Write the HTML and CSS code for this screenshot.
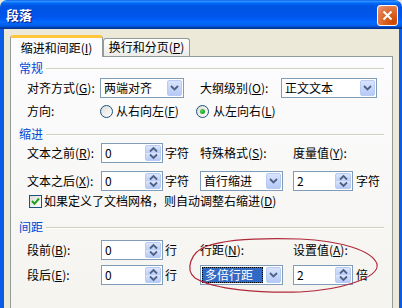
FILE: index.html
```html
<!DOCTYPE html>
<html lang="zh-CN">
<head>
    <meta charset="UTF-8">
    <title>段落</title>
    <link rel="stylesheet" href="styles.css">
</head>
<body>

    <div class="window">
        <!-- Title bar -->
        <div class="titlebar">
            <span class="title">段落</span>
            <span class="close-btn">
                <svg width="11" height="11" viewBox="0 0 11 11"><path d="M1.5 1.5 L9.5 9.5 M9.5 1.5 L1.5 9.5"/></svg>
            </span>
        </div>

        <div class="frame">
            <!-- Tabs -->
            <div class="tabs">
                <div class="tab active">缩进和间距(<u>I</u>)</div>
                <div class="tab">换行和分页(<u>P</u>)</div>
            </div>

            <div class="panel">
                <!-- 常规 -->
                <div class="group-title"><span>常规</span></div>
                <div class="row row-general">
                    <span class="label label-first">对齐方式(<u>G</u>):</span>
                    <div class="select select-align">
                        <span class="select-text">两端对齐</span>
                        <span class="drop-btn"><svg width="9" height="6" viewBox="0 0 9 6"><polyline points="1,1 4.5,4.5 8,1"/></svg></span>
                    </div>
                    <span class="label label-outline">大纲级别(<u>O</u>):</span>
                    <div class="select select-outline">
                        <span class="select-text">正文文本</span>
                        <span class="drop-btn"><svg width="9" height="6" viewBox="0 0 9 6"><polyline points="1,1 4.5,4.5 8,1"/></svg></span>
                    </div>
                </div>
                <div class="row row-dir">
                    <span class="label label-first">方向:</span>
                    <span class="radio-item radio-rtl"><span class="radio"></span>从右向左(<u>F</u>)</span>
                    <span class="radio-item"><span class="radio checked"></span>从左向右(<u>L</u>)</span>
                </div>

                <!-- 缩进 -->
                <div class="group-title group-indent"><span>缩进</span></div>
                <div class="row row-before">
                    <span class="label">文本之前(<u>R</u>):</span>
                    <div class="spinner">
                        <span class="spin-value">0</span>
                        <span class="spin-btn"><svg width="9" height="14" viewBox="0 0 9 14"><polyline points="1,5.5 4.5,2 8,5.5"/><polyline points="1,8.5 4.5,12 8,8.5"/></svg></span>
                    </div>
                    <span class="unit">字符</span>
                    <span class="label label-mid">特殊格式(<u>S</u>):</span>
                    <span class="label">度量值(<u>Y</u>):</span>
                </div>
                <div class="row row-after">
                    <span class="label">文本之后(<u>X</u>):</span>
                    <div class="spinner">
                        <span class="spin-value">0</span>
                        <span class="spin-btn"><svg width="9" height="14" viewBox="0 0 9 14"><polyline points="1,5.5 4.5,2 8,5.5"/><polyline points="1,8.5 4.5,12 8,8.5"/></svg></span>
                    </div>
                    <span class="unit">字符</span>
                    <div class="select select-small">
                        <span class="select-text">首行缩进</span>
                        <span class="drop-btn"><svg width="9" height="6" viewBox="0 0 9 6"><polyline points="1,1 4.5,4.5 8,1"/></svg></span>
                    </div>
                    <div class="spinner spinner-small">
                        <span class="spin-value">2</span>
                        <span class="spin-btn"><svg width="9" height="14" viewBox="0 0 9 14"><polyline points="1,5.5 4.5,2 8,5.5"/><polyline points="1,8.5 4.5,12 8,8.5"/></svg></span>
                    </div>
                    <span class="unit unit-right">字符</span>
                </div>
                <div class="row row-check">
                    <span class="checkbox"><svg width="9" height="9" viewBox="0 0 9 9"><polyline points="1,4 3.5,6.8 8,1.5"/></svg></span>
                    <span>如果定义了文档网格，则自动调整右缩进(<u>D</u>)</span>
                </div>

                <!-- 间距 -->
                <div class="group-title group-spacing"><span>间距</span></div>
                <div class="row row-space-before">
                    <span class="label">段前(<u>B</u>):</span>
                    <div class="spinner">
                        <span class="spin-value">0</span>
                        <span class="spin-btn"><svg width="9" height="14" viewBox="0 0 9 14"><polyline points="1,5.5 4.5,2 8,5.5"/><polyline points="1,8.5 4.5,12 8,8.5"/></svg></span>
                    </div>
                    <span class="unit">行</span>
                    <span class="label label-mid">行距(<u>N</u>):</span>
                    <span class="label">设置值(<u>A</u>):</span>
                </div>
                <div class="row row-space-after">
                    <span class="label">段后(<u>E</u>):</span>
                    <div class="spinner">
                        <span class="spin-value">0</span>
                        <span class="spin-btn"><svg width="9" height="14" viewBox="0 0 9 14"><polyline points="1,5.5 4.5,2 8,5.5"/><polyline points="1,8.5 4.5,12 8,8.5"/></svg></span>
                    </div>
                    <span class="unit">行</span>
                    <div class="select select-small">
                        <span class="select-text selected">多倍行距</span>
                        <span class="drop-btn"><svg width="9" height="6" viewBox="0 0 9 6"><polyline points="1,1 4.5,4.5 8,1"/></svg></span>
                    </div>
                    <div class="spinner spinner-small">
                        <span class="spin-value">2</span>
                        <span class="spin-btn"><svg width="9" height="14" viewBox="0 0 9 14"><polyline points="1,5.5 4.5,2 8,5.5"/><polyline points="1,8.5 4.5,12 8,8.5"/></svg></span>
                    </div>
                    <span class="unit unit-right">倍</span>
                </div>
            </div>
        </div>

        <!-- Hand-drawn red mark over the line spacing controls -->
        <svg class="mark" width="402" height="308" viewBox="0 0 402 308">
            <path d="M207 246 C230 238 268 238 300 239 C340 241 372 250 377 264 C380 278 340 290 300 292 C260 293 215 290 195 278 C185 270 190 252 207 246 Z"/>
        </svg>
    </div>

</body>
</html>
```

FILE: styles.css
```css
/* General Styles */
body {
    margin: 0;
    width: 402px;
    height: 308px;
    overflow: hidden;
    font-family: "Noto Sans CJK SC", "Liberation Sans", sans-serif;
    font-size: 12px;
    line-height: 14px;
    color: #000;
    background-color: #ECE9D8;
}

u {
    text-decoration: underline;
}

.window {
    position: relative;
    width: 402px;
    height: 308px;
    display: flex;
    flex-direction: column;
}

/* Title bar */
.titlebar {
    height: 29px;
    flex-shrink: 0;
    display: flex;
    align-items: center;
    justify-content: space-between;
    padding: 0 4px 0 6px;
    box-sizing: border-box;
    background: linear-gradient(to bottom, #0058EE 0%, #3593FF 4%, #288EFF 6%, #127DFF 8%, #036FFC 10%, #0262EE 14%, #0057E5 20%, #0054E3 24%, #0055EB 56%, #005BF5 66%, #026AFE 76%, #0062EF 86%, #0052D6 92%, #0040AB 94%, #003092 100%);
    border-radius: 7px 7px 0 0;
}

.title {
    color: #fff;
    font-weight: bold;
    font-size: 13px;
    text-shadow: 1px 1px 0 #0A1883;
}

.close-btn {
    width: 21px;
    height: 21px;
    box-sizing: border-box;
    border: 1px solid #fff;
    border-radius: 3px;
    background: radial-gradient(circle at 80% 85%, #CC4600 0%, #DC6527 45%, #E5835A 80%, #F1A78D 100%);
    display: flex;
    align-items: center;
    justify-content: center;
    margin-top: 1px;
}

.close-btn path {
    stroke: #fff;
    stroke-width: 2;
    fill: none;
}

/* Window frame */
.frame {
    flex: 1;
    border-left: 4px solid #0A5CE6;
    border-right: 3px solid #0A5CE6;
    padding: 6px 6px 0 6px;
    background-color: #ECE9D8;
}

/* Tabs */
.tabs {
    display: flex;
    align-items: flex-end;
    height: 22px;
    margin-bottom: -1px;
}

.tab {
    box-sizing: border-box;
    height: 18px;
    width: 87px;
    margin-bottom: 1px;
    text-align: center;
    line-height: 16px;
    border: 1px solid #919B9C;
    border-bottom: none;
    border-radius: 3px 3px 0 0;
    background: linear-gradient(to bottom, #FFFFFF, #ECEBE6);
}

.tab.active {
    position: relative;
    z-index: 1;
    width: 93px;
    height: 22px;
    margin-bottom: 0;
    line-height: 19px;
    border-top: 3px solid #FFC83C;
    background: #FCFCFE;
}

/* Tab panel */
.panel {
    width: 383px;
    height: 260px;
    box-sizing: border-box;
    border: 1px solid #919B9C;
    background: linear-gradient(to bottom, #FCFCFE, #F4F3EE);
    padding: 4px 8px 0 0;
}

.group-title {
    display: flex;
    align-items: center;
    height: 14px;
    padding-left: 8px;
    color: #0046D5;
}

.group-title::after {
    content: "";
    flex: 1;
    margin-left: 3px;
    margin-top: 2px;
    border-top: 1px solid #D0D0BF;
    border-bottom: 1px solid #FFFFFF;
}

.group-indent {
    margin-top: 6px;
}

.group-spacing {
    margin-top: 12px;
}

.row {
    display: flex;
    align-items: center;
    height: 20px;
    padding-left: 16px;
}

.row-general {
    margin-top: 3px;
}

.row-dir {
    margin-top: 3px;
}

.row-before {
    margin-top: 2px;
}

.row-after {
    margin-top: 8px;
}

.row-check {
    height: 14px;
    margin-top: 3px;
    padding-left: 18px;
}

.row-space-before {
    margin-top: 6px;
}

.row-space-after {
    margin-top: 5px;
}

.label {
    width: 74px;
    flex-shrink: 0;
    white-space: nowrap;
}

.label-first {
    width: 73px;
}

.label-outline {
    width: 81px;
    margin-left: 16px;
}

.label-mid {
    width: 93px;
}

.unit {
    width: 35px;
    padding-left: 2px;
    flex-shrink: 0;
}

.unit-right {
    width: auto;
    padding-left: 3px;
}

/* Combo boxes */
.select {
    display: flex;
    align-items: center;
    justify-content: space-between;
    height: 20px;
    box-sizing: border-box;
    border: 1px solid #7F9DB9;
    background-color: #fff;
    padding: 1px;
    flex-shrink: 0;
}

.select-align {
    width: 84px;
}

.select-outline {
    width: 96px;
}

.select-small {
    width: 83px;
    margin-right: 10px;
}

.select-text {
    padding-left: 2px;
    white-space: nowrap;
}

.select-text.selected {
    background-color: #316AC5;
    color: #fff;
    width: 58px;
    height: 16px;
    line-height: 16px;
    outline: 1px dotted #000;
    outline-offset: -1px;
    padding-left: 3px;
}

.drop-btn {
    width: 15px;
    height: 16px;
    box-sizing: border-box;
    border: 1px solid #B9CBF3;
    border-radius: 2px;
    background: linear-gradient(to bottom, #D9E4FD, #B6CAF7);
    display: flex;
    align-items: center;
    justify-content: center;
}

.drop-btn polyline,
.spin-btn polyline {
    fill: none;
    stroke: #4D6185;
    stroke-width: 1.8;
}

/* Spinners */
.spinner {
    display: flex;
    align-items: center;
    justify-content: space-between;
    width: 62px;
    height: 20px;
    box-sizing: border-box;
    border: 1px solid #7F9DB9;
    background-color: #fff;
    padding: 1px;
    flex-shrink: 0;
}

.spinner-small {
    width: 60px;
}

.spin-value {
    padding-left: 2px;
}

.spin-btn {
    width: 16px;
    height: 16px;
    box-sizing: border-box;
    border: 1px solid #B9CBF3;
    border-radius: 2px;
    background: linear-gradient(to bottom, #DCE6FD, #BCCDF6 50%, #DCE6FD 50%, #B6C9F5);
    display: flex;
    align-items: center;
    justify-content: center;
}

/* Radio buttons and checkbox */
.radio-item {
    display: flex;
    align-items: center;
    white-space: nowrap;
}

.radio-rtl {
    width: 96px;
}

.radio {
    width: 13px;
    height: 13px;
    box-sizing: border-box;
    border: 1px solid #1C5180;
    border-radius: 50%;
    background: linear-gradient(135deg, #DCDCD7, #FFFFFF);
    margin-right: 4px;
    display: flex;
    align-items: center;
    justify-content: center;
}

.radio-rtl .radio {
    margin-right: 3px;
}

.radio.checked::after {
    content: "";
    width: 5px;
    height: 5px;
    border-radius: 50%;
    background: radial-gradient(circle at 35% 35%, #55D551, #21A121 70%);
}

.checkbox {
    width: 13px;
    height: 13px;
    box-sizing: border-box;
    border: 1px solid #1C5180;
    background: linear-gradient(135deg, #DCDCD7, #FFFFFF);
    margin-right: 2px;
    display: flex;
    align-items: center;
    justify-content: center;
}

.checkbox polyline {
    fill: none;
    stroke: #21A121;
    stroke-width: 2;
}

/* Red mark */
.mark {
    position: absolute;
    left: 0;
    top: 0;
    pointer-events: none;
}

.mark path {
    fill: none;
    stroke: #B0283A;
    stroke-width: 1.2;
}
```
